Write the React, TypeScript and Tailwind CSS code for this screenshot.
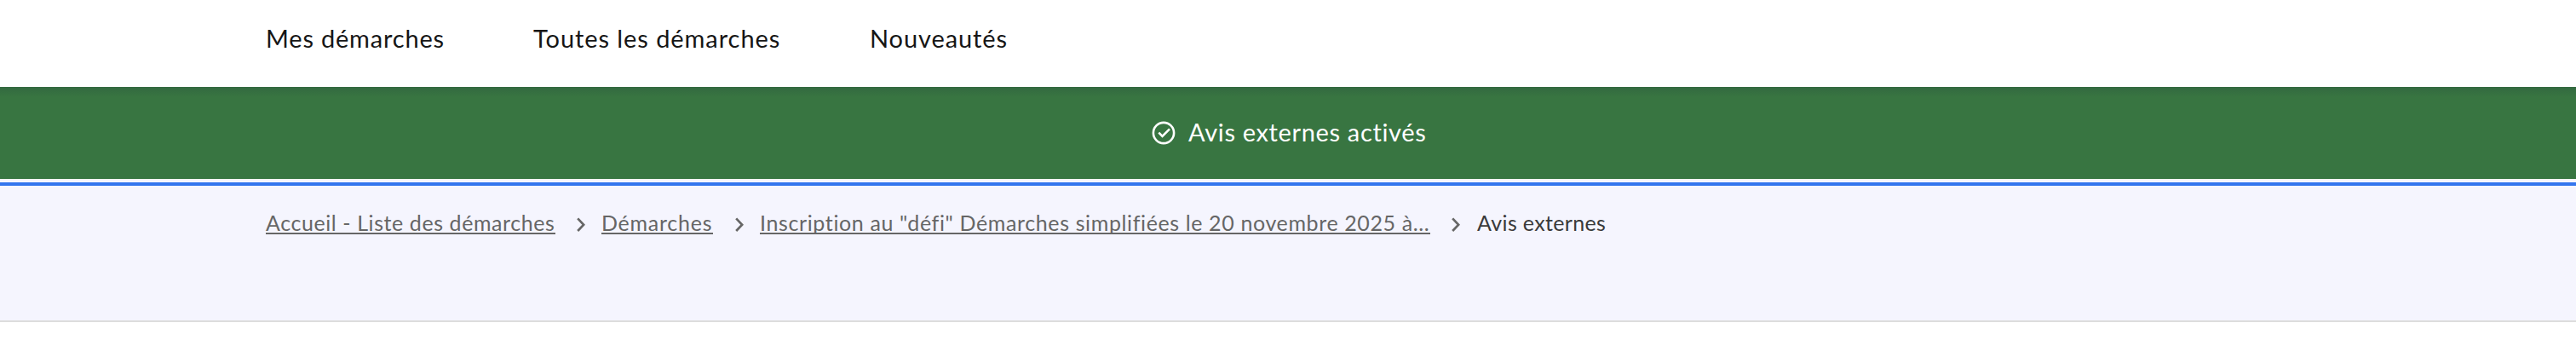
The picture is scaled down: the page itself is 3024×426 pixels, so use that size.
import React from "react";

function Chevron({ className }: { className: string }) {
  return (
    <svg viewBox="0 0 10 17" className={`h-[17px] w-[10px] shrink-0 ${className}`} fill="none" stroke="#666666" strokeWidth="2.7">
      <path d="M1.2 1.4 8.2 8.7 1.2 16" />
    </svg>
  );
}

const crumb = "whitespace-nowrap border-b-2 border-[#666666] leading-[28px] h-[28px]";

export default function App() {
  return (
    <div className="h-[426px] w-full overflow-hidden bg-white font-['Lato',sans-serif]">
      <nav className="flex h-[102px] items-start pl-[312px] pt-[23px] text-[29px] leading-[44px] text-[#161616]">
        <a className="w-[314px] whitespace-nowrap tracking-[0.8px]">Mes démarches</a>
        <a className="w-[395px] whitespace-nowrap tracking-[0.93px]">Toutes les démarches</a>
        <a className="whitespace-nowrap tracking-[0.9px]">Nouveautés</a>
      </nav>
      <div className="flex h-[108px] items-start bg-linear-to-b from-[#336940] via-[#387541] via-[12px] to-[#387541] pl-[1352px] pt-[31px] text-[29px] leading-[44px] text-white">
        <svg viewBox="0 0 28 28" className="mt-[9px] mr-[15px] h-[28px] w-[28px]" fill="none" stroke="currentColor" strokeWidth="2.6">
          <circle cx="14" cy="14" r="12.1" />
          <path d="M8.3 13.7 12.5 17.9 21 9.4" />
        </svg>
        <span className="whitespace-nowrap tracking-[0.66px]">Avis externes activés</span>
      </div>
      <div className="h-[168px] border-b-2 border-[#dddddd] bg-[#f5f5fe] pt-1">
        <div className="h-1 bg-[#3375ee]" />
        <div className="flex items-start pl-[312px] pt-[29px] text-[25px] text-[#666666]">
          <a className={`${crumb} w-[340px] tracking-[0.58px]`}>Accueil - Liste des démarches</a>
          <Chevron className="mt-[8px] ml-[25px] mr-[19px]" />
          <a className={`${crumb} w-[131px] tracking-[0.75px]`}>Démarches</a>
          <Chevron className="mt-[8px] ml-[26px] mr-[19px]" />
          <a className={`${crumb} w-[787px] tracking-[0.62px]`}>Inscription au "défi" Démarches simplifiées le 20 novembre 2025 à...</a>
          <Chevron className="mt-[8px] ml-[25px] mr-[20px]" />
          <span className="whitespace-nowrap leading-[28px] tracking-[0.35px] text-[#3a3a3a]">Avis externes</span>
        </div>
      </div>
    </div>
  );
}
